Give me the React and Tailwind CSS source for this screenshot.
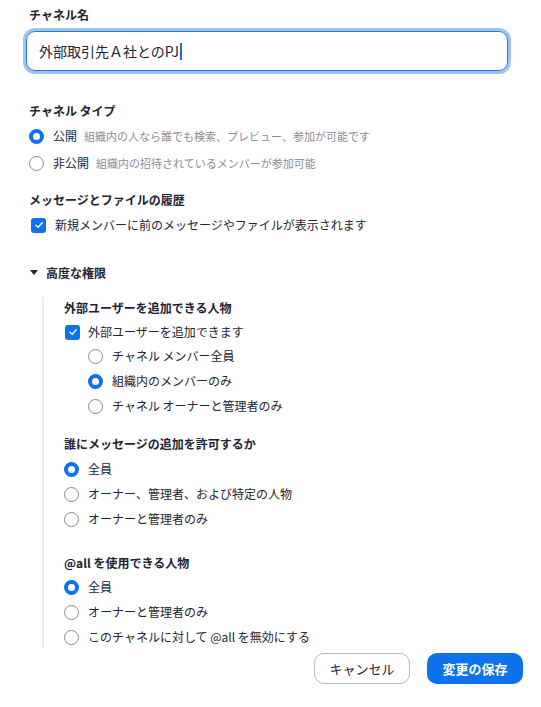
import React from "react";

const Radio = ({ checked }) =>
  checked ? (
    <span className="box-border inline-block h-[15px] w-[15px] shrink-0 rounded-full border-[4px] border-[#0e72ed] bg-white" />
  ) : (
    <span className="box-border inline-block h-[15px] w-[15px] shrink-0 rounded-full border border-[#8a8a8a] bg-white" />
  );

const Check = () => (
  <span className="flex h-[15px] w-[15px] shrink-0 items-center justify-center rounded-[3px] bg-[#0e72ed]">
    <svg width="10" height="10" viewBox="0 0 10 10" fill="none">
      <path d="M2 5.2 L4.2 7.3 L8.2 2.8" stroke="white" strokeWidth="1.4" strokeLinecap="round" strokeLinejoin="round" />
    </svg>
  </span>
);

const RadioRow = ({ checked, children }) => (
  <div className="flex h-[20px] items-center gap-[9px] text-[12px] text-[#232333]">
    <Radio checked={checked} />
    <span>{children}</span>
  </div>
);

const Header = ({ children, className = "" }) => (
  <div className={"h-[16px] text-[12px] font-bold leading-[16px] text-[#232333] " + className}>{children}</div>
);

export default function App() {
  return (
    <div
      className="relative h-[707px] w-[541px] overflow-hidden bg-white"
      style={{ fontFamily: '"Noto Sans CJK JP", "Noto Sans", sans-serif' }}
    >
      <div className="pl-[29px]">
        <Header className="mt-[7px]">チャネル名</Header>
      </div>

      <div className="ml-[26px] mt-[8px] flex h-[40px] w-[482px] items-center rounded-[9px] border border-[#2a74d6] px-[12px] text-[14px] text-[#232333] shadow-[0_0_0_3px_#9cc3f2]">
        <span>外部取引先Ａ社とのPJ</span>
        <span className="ml-[1px] inline-block h-[17px] w-[2px] bg-[#1a6fd9]" />
      </div>

      <div className="pl-[29px]">
        <Header className="mt-[32px]">チャネル タイプ</Header>
        <div className="mt-[7px] flex flex-col gap-[7px]">
          <div className="flex h-[20px] items-center text-[12px] text-[#232333]">
            <Radio checked />
            <span className="ml-[9px]">公開</span>
            <span className="ml-[7px] text-[11px] text-[#8b8b96]">組織内の人なら誰でも検索、プレビュー、参加が可能です</span>
          </div>
          <div className="flex h-[20px] items-center text-[12px] text-[#232333]">
            <Radio />
            <span className="ml-[9px]">非公開</span>
            <span className="ml-[7px] text-[11px] text-[#8b8b96]">組織内の招待されているメンバーが参加可能</span>
          </div>
        </div>

        <Header className="mt-[19px]">メッセージとファイルの履歴</Header>
        <div className="mt-[7px] flex h-[20px] items-center gap-[9px] pl-[2px] text-[12px] text-[#232333]">
          <Check />
          <span>新規メンバーに前のメッセージやファイルが表示されます</span>
        </div>

        <div className="mt-[30px] flex h-[16px] items-center text-[12px] font-bold text-[#232333]">
          <svg width="8" height="6" viewBox="0 0 8 6" className="ml-[1px]">
            <path d="M0 0 L8 0 L4 5 Z" fill="#232333" />
          </svg>
          <span className="ml-[8px]">高度な権限</span>
        </div>
      </div>

      <div className="ml-[42px] mt-[16px] border-l-2 border-[#ebebeb] pb-[1px] pl-[20px] pt-[3px]">
        <Header>外部ユーザーを追加できる人物</Header>
        <div className="mt-[6px] flex h-[20px] items-center gap-[8px] pl-[1px] text-[12px] text-[#232333]">
          <Check />
          <span>外部ユーザーを追加できます</span>
        </div>
        <div className="mt-[4px] flex flex-col gap-[5px] pl-[24px]">
          <RadioRow>チャネル メンバー全員</RadioRow>
          <RadioRow checked>組織内のメンバーのみ</RadioRow>
          <RadioRow>チャネル オーナーと管理者のみ</RadioRow>
        </div>

        <Header className="mt-[20px]">誰にメッセージの追加を許可するか</Header>
        <div className="mt-[7px] flex flex-col gap-[5px]">
          <RadioRow checked>全員</RadioRow>
          <RadioRow>オーナー、管理者、および特定の人物</RadioRow>
          <RadioRow>オーナーと管理者のみ</RadioRow>
        </div>

        <Header className="mt-[26px]">@all を使用できる人物</Header>
        <div className="mt-[6px] flex flex-col gap-[5px]">
          <RadioRow checked>全員</RadioRow>
          <RadioRow>オーナーと管理者のみ</RadioRow>
          <RadioRow>このチャネルに対して @all を無効にする</RadioRow>
        </div>
      </div>

      <div className="mt-[5px] flex justify-end gap-[17px] pr-[18px]">
        <button className="h-[31px] w-[96px] rounded-[10px] border border-[#b9b9c0] bg-white text-[13px] text-[#232333]">
          キャンセル
        </button>
        <button className="h-[31px] w-[96px] rounded-[10px] bg-[#0e72ed] text-[13px] font-bold text-white">
          変更の保存
        </button>
      </div>
    </div>
  );
}
